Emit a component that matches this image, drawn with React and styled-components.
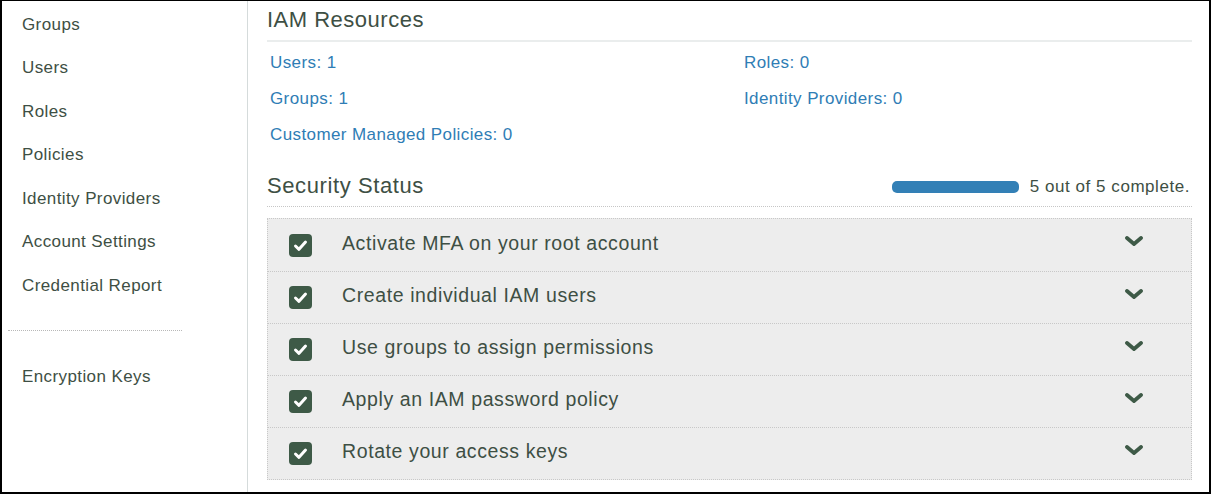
import React from "react";
import styled, { createGlobalStyle } from "styled-components";

const GlobalStyle = createGlobalStyle`
  html, body {
    margin: 0;
    padding: 0;
    background: #ffffff;
  }
  * {
    box-sizing: border-box;
  }
`;

const Frame = styled.div`
  display: flex;
  width: 1211px;
  height: 494px;
  border: 2px solid #000;
  border-top-width: 1px;
  background: #fff;
  font-family: "Liberation Sans", Arial, sans-serif;
  color: #3e4f44;
  overflow: hidden;
`;

const Sidebar = styled.nav`
  width: 246px;
  flex-shrink: 0;
  border-right: 1px solid #d5dbdb;
  padding-top: 2px;
  display: flex;
  flex-direction: column;
`;

const NavItem = styled.div`
  height: 43.5px;
  display: flex;
  align-items: center;
  padding-left: 20px;
  font-size: 17px;
  letter-spacing: 0.4px;
  margin-top: ${(p) => (p.$spaced ? "25px" : "0")};
`;

const NavDivider = styled.div`
  margin: 22px 0 0 6px;
  width: 174px;
  border-top: 1px dotted #b8b8b8;
`;

const Main = styled.main`
  flex: 1;
  padding: 0 17px 0 19px;
  display: flex;
  flex-direction: column;
`;

const SectionTitle = styled.h2`
  margin: 0;
  font-weight: normal;
  font-size: 22px;
  letter-spacing: 0.5px;
  line-height: 26px;
  padding: 6px 0 7px;
  border-bottom: 2px solid #eaeded;
`;

const ResourceGrid = styled.div`
  display: grid;
  grid-template-columns: 474px 1fr;
  grid-auto-rows: 36px;
  margin-top: 3px;
  padding-left: 3px;
`;

const ResourceLink = styled.a`
  display: flex;
  align-items: center;
  font-size: 17px;
  letter-spacing: 0.4px;
  color: #2f7db5;
  text-decoration: none;
  grid-column: ${(p) => p.$col};
`;

const StatusHeader = styled.div`
  display: flex;
  align-items: center;
  justify-content: space-between;
  height: 41px;
  margin-top: 13px;
  border-bottom: 1px dotted #c6c6c6;
`;

const StatusTitle = styled.h2`
  margin: 0;
  font-weight: normal;
  font-size: 22px;
  letter-spacing: 0.6px;
`;

const Progress = styled.div`
  display: flex;
  align-items: center;
  gap: 11px;
  font-size: 17px;
  letter-spacing: 0.55px;
  padding: 2px 2px 0 0;
`;

const Bar = styled.div`
  width: 127px;
  height: 12px;
  border-radius: 5px;
  background: #3380b6;
`;

const Checklist = styled.div`
  margin-top: 11px;
  border: 1px dotted #c8c8c8;
  background: #ededed;
`;

const Item = styled.div`
  display: flex;
  align-items: center;
  height: 52.1px;
  padding: 0 48px 0 21px;
  border-top: ${(p) => (p.$first ? "none" : "1px dotted #c8c8c8")};
`;

const CheckBox = styled.span`
  width: 23px;
  height: 23px;
  border-radius: 4px;
  background: #3e5a47;
  display: flex;
  align-items: center;
  justify-content: center;
  flex-shrink: 0;
`;

const ItemLabel = styled.span`
  flex: 1;
  margin-left: 30px;
  padding-bottom: 4px;
  font-size: 19.5px;
  letter-spacing: 0.6px;
`;

const Chevron = styled.svg`
  margin-top: -8px;
  flex-shrink: 0;
`;

const navItems = [
  "Groups",
  "Users",
  "Roles",
  "Policies",
  "Identity Providers",
  "Account Settings",
  "Credential Report",
];

const resources = [
  { label: "Users: 1", col: 1 },
  { label: "Roles: 0", col: 2 },
  { label: "Groups: 1", col: 1 },
  { label: "Identity Providers: 0", col: 2 },
  { label: "Customer Managed Policies: 0", col: 1 },
];

const checks = [
  "Activate MFA on your root account",
  "Create individual IAM users",
  "Use groups to assign permissions",
  "Apply an IAM password policy",
  "Rotate your access keys",
];

export default function App() {
  return (
    <>
      <GlobalStyle />
      <Frame>
        <Sidebar>
          {navItems.map((n) => (
            <NavItem key={n}>{n}</NavItem>
          ))}
          <NavDivider />
          <NavItem $spaced>Encryption Keys</NavItem>
        </Sidebar>
        <Main>
          <SectionTitle>IAM Resources</SectionTitle>
          <ResourceGrid>
            {resources.map((r) => (
              <ResourceLink key={r.label} href="#" $col={r.col}>
                {r.label}
              </ResourceLink>
            ))}
          </ResourceGrid>
          <StatusHeader>
            <StatusTitle>Security Status</StatusTitle>
            <Progress>
              <Bar />
              <span>5 out of 5 complete.</span>
            </Progress>
          </StatusHeader>
          <Checklist>
            {checks.map((c, i) => (
              <Item key={c} $first={i === 0}>
                <CheckBox>
                  <svg width="15" height="13" viewBox="0 0 15 13">
                    <polyline
                      points="2.5,7 6,10.3 12.5,3"
                      fill="none"
                      stroke="#fff"
                      strokeWidth="3"
                      strokeLinecap="round"
                      strokeLinejoin="round"
                    />
                  </svg>
                </CheckBox>
                <ItemLabel>{c}</ItemLabel>
                <Chevron width="18" height="10" viewBox="0 0 18 10">
                  <polyline
                    points="2,2 9,8 16,2"
                    fill="none"
                    stroke="#3e5a47"
                    strokeWidth="3.8"
                    strokeLinecap="round"
                    strokeLinejoin="round"
                  />
                </Chevron>
              </Item>
            ))}
          </Checklist>
        </Main>
      </Frame>
    </>
  );
}
